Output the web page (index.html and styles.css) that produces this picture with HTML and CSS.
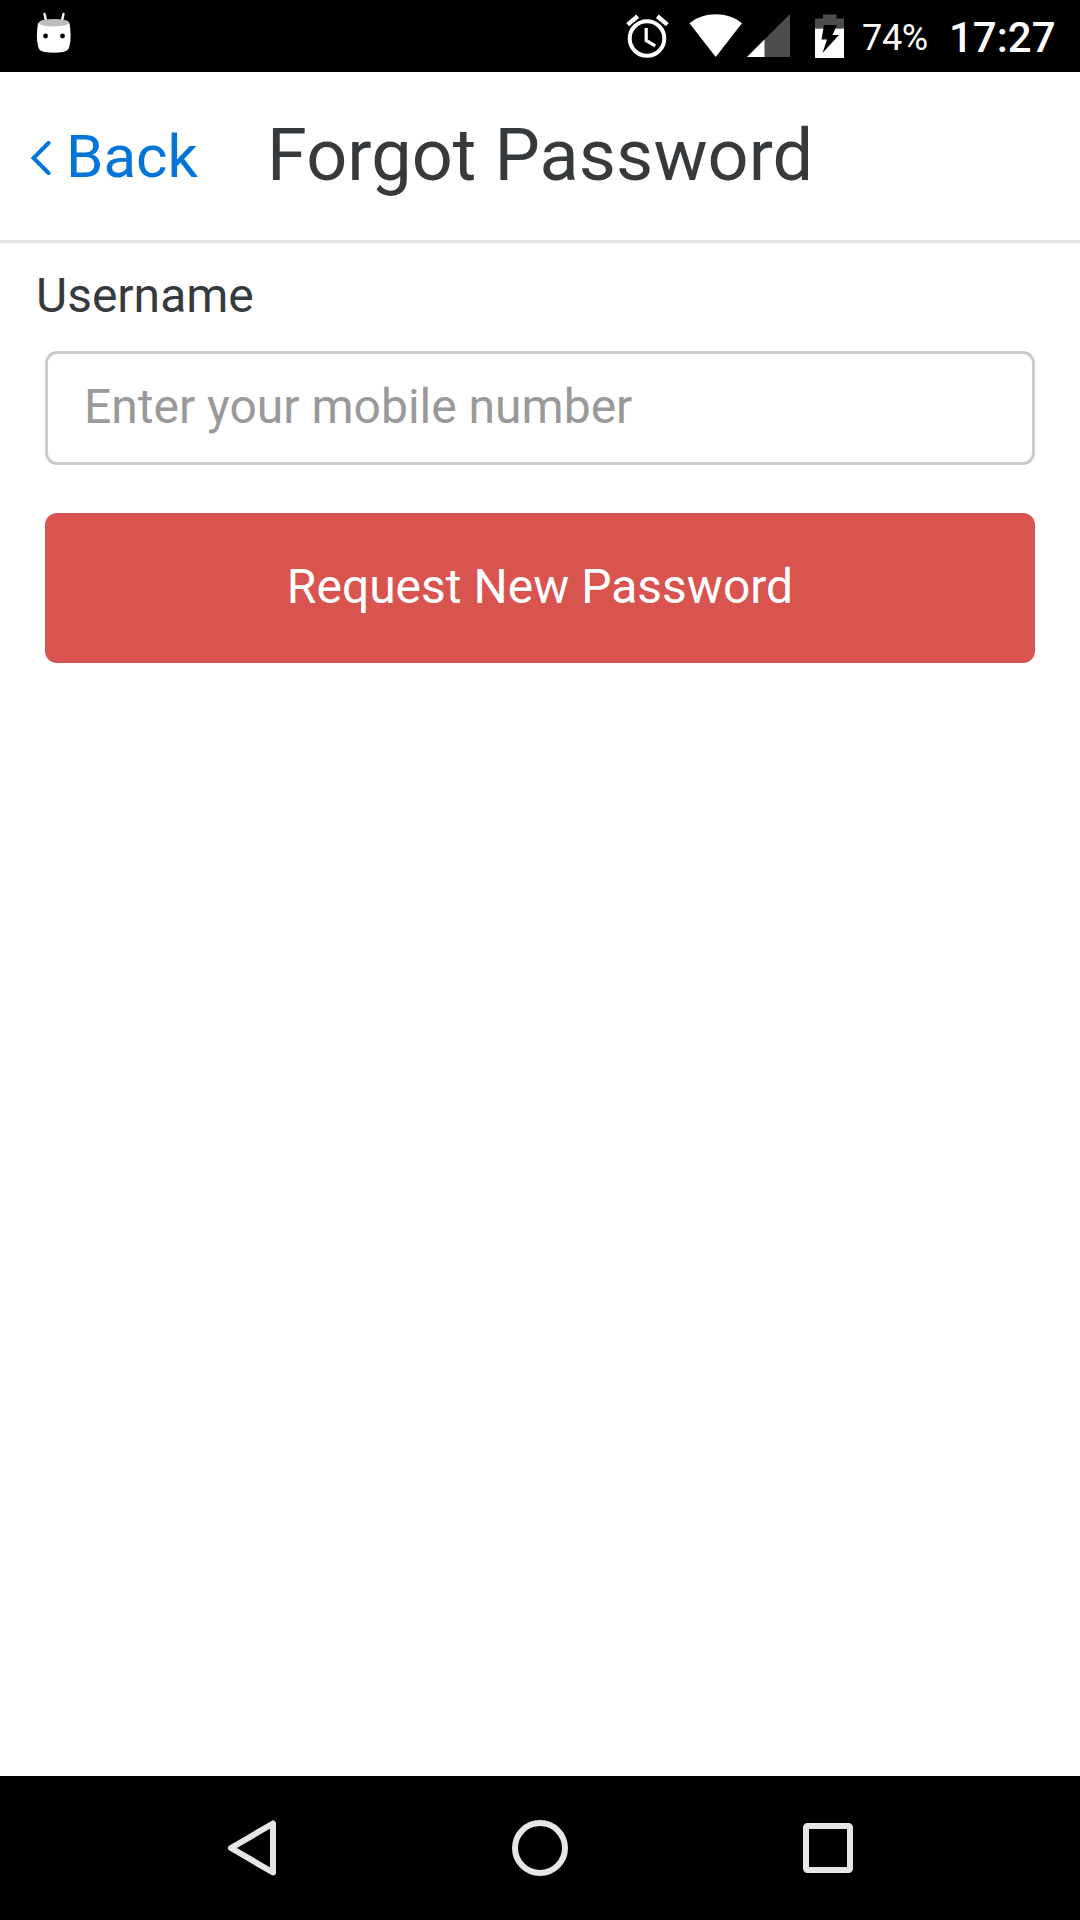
FILE: index.html
```html
<!DOCTYPE html>
<html lang="en">
<head>
<meta charset="utf-8">
<title>Forgot Password</title>
<link rel="stylesheet" href="styles.css">
</head>
<body>
<div class="screen">
  <div class="status-bar">
    <svg class="icon-robot" width="40" height="72" viewBox="0 0 40 72">
      <path d="M8.500 14l2 9M27.500 14l-2 9" stroke="#fff" stroke-width="2.400" stroke-linecap="round"/>
      <path d="M2 23C.5 32 .5 40 2 46c.8 4 3 5 6.500 6 6 1 12.500 1 18.500 0 3.500-1 5.700-2 6.500-6 1.500-6 1.500-14 0-23z" fill="#fff"/>
      <ellipse cx="18" cy="22.700" rx="15.300" ry="3.800" fill="#bdbdbd"/>
      <circle cx="9.500" cy="36" r="2.400"/><circle cx="26.500" cy="36" r="2.400"/>
    </svg>
    <div class="status-right">
      <svg class="icon-alarm" width="44" height="72" viewBox="0 0 44 72" fill="none" stroke="#fff">
        <circle cx="22" cy="38.500" r="17.300" stroke-width="4"/>
        <path d="M21.200 28v12.500l9 5.300" stroke-width="3.200"/>
        <path d="M2.700 24.600l10-8.300M32.300 16.300l10 8.300" stroke-width="4.400"/>
      </svg>
      <svg class="icon-wifi" width="54" height="72" viewBox="0 0 54 72">
        <path d="M.500 23.300C15 11.200 38.500 11.200 53 23.300L26.700 57z" fill="#fff"/>
      </svg>
      <svg class="icon-signal" width="43" height="72" viewBox="0 0 43 72">
        <path d="M43 14v43H0z" fill="#4d4d4d"/><path d="M17.500 39.500V57H0z" fill="#fff"/>
      </svg>
      <svg class="icon-battery" width="29" height="72" viewBox="0 0 29 72">
        <path d="M0 18.500h8v-4h13.500v4H29V29H0z" fill="#4d4d4d"/>
        <path d="M0 28.700h29V58H0z" fill="#fff"/>
        <path d="M9 25h13l-4.500 10H24L7.500 53 12 39.500H6.500z"/>
      </svg>
      <span class="percent">74%</span>
      <span class="clock">17:27</span>
    </div>
  </div>
  <header class="header">
    <a class="back"><svg class="chevron" width="20" height="34" viewBox="0 0 20 34"><path d="M17.500 2L2.500 17l15 15" fill="none" stroke="#0275d8" stroke-width="4" stroke-linecap="round"/></svg><span>Back</span></a>
    <h1 class="title">Forgot Password</h1>
  </header>
  <main class="content">
    <label class="label" for="username">Username</label>
    <input class="field" id="username" type="text" placeholder="Enter your mobile number">
    <button class="submit" type="button">Request New Password</button>
  </main>
  <nav class="nav-bar">
    <svg width="58" height="58" viewBox="0 0 58 58"><path d="M50 4.500v49L8 29z"/></svg>
    <svg width="58" height="58" viewBox="0 0 58 58"><circle cx="29" cy="29" r="25"/></svg>
    <svg width="58" height="58" viewBox="0 0 58 58"><rect x="7" y="7" width="44" height="44" rx="1.500"/></svg>
  </nav>
</div>
</body>
</html>
```

FILE: styles.css
```css
* { box-sizing: border-box; }
body { margin: 0; font-family: Roboto, sans-serif; background: #fff; }
.screen { width: 1080px; height: 1920px; display: flex; flex-direction: column; overflow: hidden; }

.status-bar { height: 72px; flex: none; background: #000; color: #fff; display: flex; justify-content: space-between; padding-left: 36px; }
.status-right { display: flex; padding-right: 22px; }
.status-right svg, .status-right span { flex: none; }
.icon-wifi { margin-left: 20px; }
.icon-signal { margin-left: 4px; }
.icon-battery { margin-left: 25px; }
.percent { width: 70px; margin-left: 18px; font-size: 36px; line-height: 77px; letter-spacing: -0.3px; white-space: nowrap; }
.clock { width: 109px; margin-left: 17px; font-size: 42px; font-weight: 500; line-height: 75px; white-space: nowrap; }

.header { height: 171px; flex: none; border-bottom: 3px solid #e2e2e2; display: flex; line-height: 168px; padding-left: 30px; }
.back { width: 237px; display: flex; align-items: center; padding-top: 2px; color: #0275d8; font-size: 60px; line-height: 166px; }
.chevron { flex: none; margin: 1px 15px 0 1px; }
.title { margin: 0; font-size: 72px; font-weight: 400; letter-spacing: 0.1px; color: #373a3c; white-space: nowrap; }

.content { flex: 1; padding: 20px 45px 0; display: flex; flex-direction: column; }
.label { font-size: 48px; line-height: 66px; color: #373a3c; margin: 0 0 22px -9px; }
.field { height: 114px; border: 3px solid #ccc; border-radius: 12px; padding: 0 36px 3px; font: 48px Roboto, sans-serif; color: #373a3c; background: #fff; }
.field::placeholder { color: #999; opacity: 1; }
.submit { height: 150px; margin-top: 48px; border: 0; border-radius: 12px; padding: 0 0 3px; background: #d9534f; color: #fff; font: 48px Roboto, sans-serif; }

.nav-bar { height: 144px; flex: none; background: #000; display: flex; justify-content: center; align-items: center; gap: 230px; }
.nav-bar svg { fill: none; stroke: #e6e6e6; stroke-width: 6; stroke-linejoin: round; }
```
